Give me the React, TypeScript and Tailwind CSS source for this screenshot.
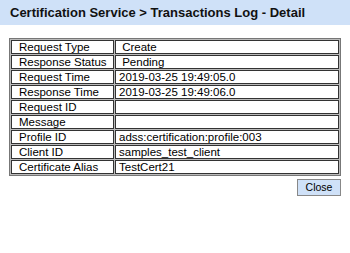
const rows: [string, string][] = [
  ["Request Type", "\u00a0Create"],
  ["Response Status", "\u00a0Pending"],
  ["Request Time", "2019-03-25 19:49:05.0"],
  ["Response Time", "2019-03-25 19:49:06.0"],
  ["Request ID", ""],
  ["Message", ""],
  ["Profile ID", "adss:certification:profile:003"],
  ["Client ID", "samples_test_client"],
  ["Certificate Alias", "TestCert21"],
];

const App = () => {
  return (
    <div className="w-[350px] h-[253px] bg-white font-['Liberation_Sans',Arial,sans-serif] text-black">
      <div className="h-[25px] bg-[#cfe1f8] flex items-center pl-[10px]">
        <h1 className="text-[13px] font-bold text-[#111]">Certification Service &gt; Transactions Log - Detail</h1>
      </div>
      <div className="pt-[13px] px-[9px]">
        <table className="w-[332px] border-separate border-spacing-[1px] border border-[#777] bg-[#bbb] text-[11.5px] leading-[12px]">
          <tbody>
            {rows.map(([label, value]) => (
              <tr key={label}>
                <td className="w-[103px] bg-white border border-[#333] pl-[7px] py-0 whitespace-nowrap">{label || "\u00a0"}</td>
                <td className="bg-white border border-[#333] pl-[3px] py-0 whitespace-nowrap">{value || "\u00a0"}</td>
              </tr>
            ))}
          </tbody>
        </table>
        <div className="flex justify-end mt-[3px]">
          <button className="w-[44px] h-[17px] bg-[#cfe1f8] border border-[#888] text-[10.5px] leading-none text-black">
            Close
          </button>
        </div>
      </div>
    </div>
  );
};

export default App;
